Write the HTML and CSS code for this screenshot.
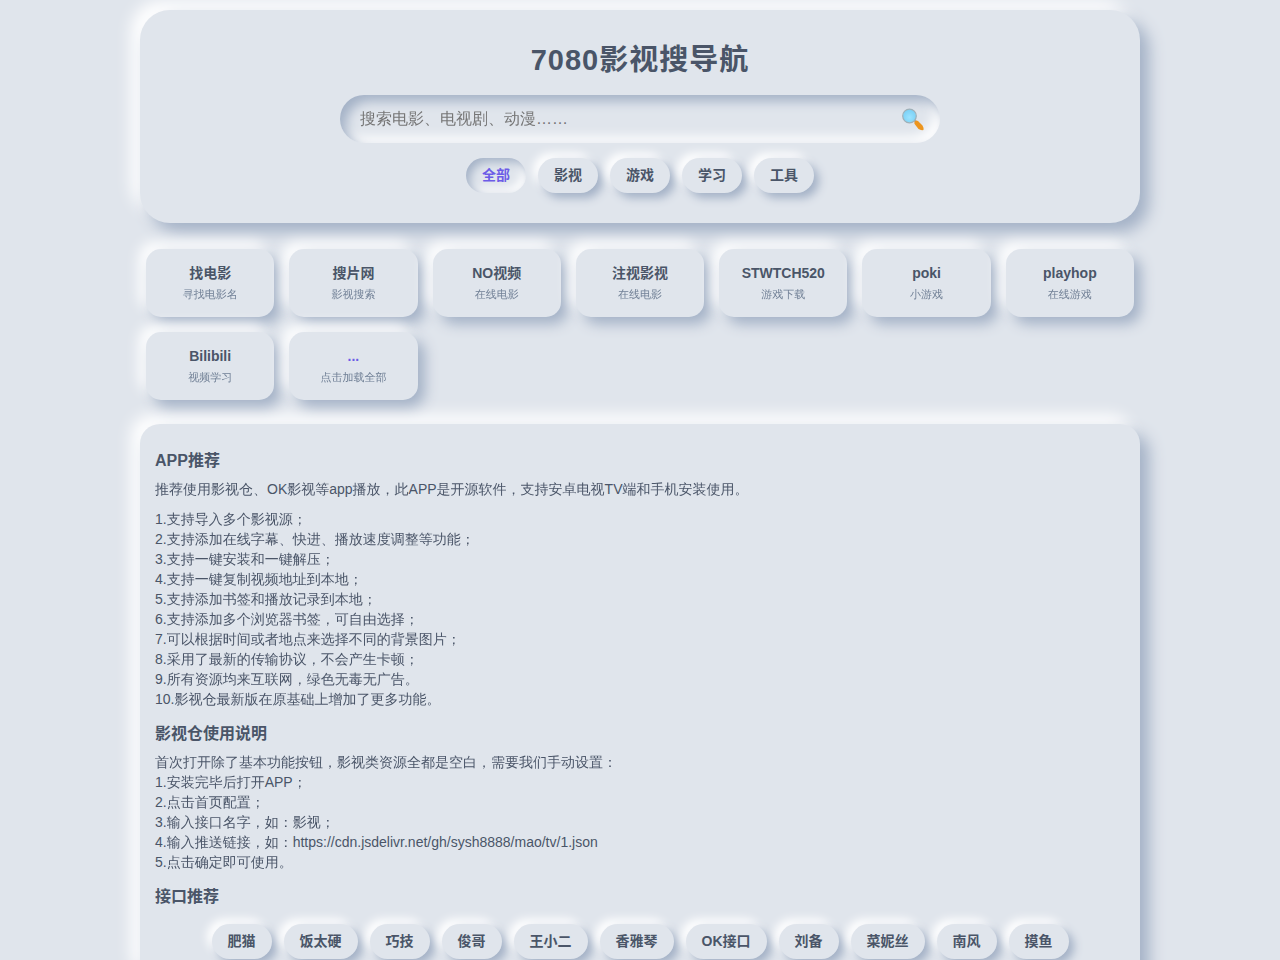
FILE: index.html
```html
<!DOCTYPE html>
<html lang="zh-CN">
<head>
    <meta charset="UTF-8">
    <meta name="viewport" content="width=device-width, initial-scale=1.0">
    <title>7080影视搜导航</title>
    <link rel="stylesheet" href="styles.css">
</head>
<body>
    <div class="container">
        <header class="header">
            <h1>7080影视搜导航</h1>
            <form class="search-box">
                <input type="text" class="search-input" aria-label="搜索" placeholder="搜索电影、电视剧、动漫……">
                <button type="button" class="search-btn" aria-label="搜索">
                    <svg viewBox="0 0 24 24" width="24" height="24">
                        <defs>
                            <radialGradient id="lens" cx="50%" cy="60%" r="60%">
                                <stop offset="0" stop-color="#9be3ff"/>
                                <stop offset="1" stop-color="#78cff5"/>
                            </radialGradient>
                        </defs>
                        <path d="M12.500 14l1.500-1.500 2.500 2.500-1.500 1.500z" fill="#90a4ae"/>
                        <path d="M13.500 15q1-2.200 3.500-1l4.500 4.500q1.500 2.500 1 4.500-3 0.500-5-1l-3.500-4.500q-1-1-0.500-2.500z" fill="#ec951f"/>
                        <circle cx="8.500" cy="9" r="6.800" fill="url(#lens)" stroke="#9fb0b8" stroke-width="1.200"/>
                    </svg>
                </button>
            </form>
            <nav class="categories">
                <button type="button" class="pill active">全部</button>
                <button type="button" class="pill">影视</button>
                <button type="button" class="pill">游戏</button>
                <button type="button" class="pill">学习</button>
                <button type="button" class="pill">工具</button>
            </nav>
        </header>

        <main class="site-grid">
            <a class="card" href="#"><h3>找电影</h3><p>寻找电影名</p></a>
            <a class="card" href="#"><h3>搜片网</h3><p>影视搜索</p></a>
            <a class="card" href="#"><h3>NO视频</h3><p>在线电影</p></a>
            <a class="card" href="#"><h3>注视影视</h3><p>在线电影</p></a>
            <a class="card" href="#"><h3>STWTCH520</h3><p>游戏下载</p></a>
            <a class="card" href="#"><h3>poki</h3><p>小游戏</p></a>
            <a class="card" href="#"><h3>playhop</h3><p>在线游戏</p></a>
            <a class="card" href="#"><h3>Bilibili</h3><p>视频学习</p></a>
            <a class="card more" href="#"><h3>...</h3><p>点击加载全部</p></a>
        </main>

        <section class="info">
            <h2>APP推荐</h2>
            <p>推荐使用影视仓、OK影视等app播放，此APP是开源软件，支持安卓电视TV端和手机安装使用。</p>
            <p>1.支持导入多个影视源；<br>
            2.支持添加在线字幕、快进、播放速度调整等功能；<br>
            3.支持一键安装和一键解压；<br>
            4.支持一键复制视频地址到本地；<br>
            5.支持添加书签和播放记录到本地；<br>
            6.支持添加多个浏览器书签，可自由选择；<br>
            7.可以根据时间或者地点来选择不同的背景图片；<br>
            8.采用了最新的传输协议，不会产生卡顿；<br>
            9.所有资源均来互联网，绿色无毒无广告。<br>
            10.影视仓最新版在原基础上增加了更多功能。</p>

            <h2>影视仓使用说明</h2>
            <p>首次打开除了基本功能按钮，影视类资源全都是空白，需要我们手动设置：<br>
            1.安装完毕后打开APP；<br>
            2.点击首页配置；<br>
            3.输入接口名字，如：影视；<br>
            4.输入推送链接，如：https://cdn.jsdelivr.net/gh/sysh8888/mao/tv/1.json<br>
            5.点击确定即可使用。</p>

            <h2>接口推荐</h2>
            <div class="categories links">
                <button type="button" class="pill">肥猫</button>
                <button type="button" class="pill">饭太硬</button>
                <button type="button" class="pill">巧技</button>
                <button type="button" class="pill">俊哥</button>
                <button type="button" class="pill">王小二</button>
                <button type="button" class="pill">香雅琴</button>
                <button type="button" class="pill">OK接口</button>
                <button type="button" class="pill">刘备</button>
                <button type="button" class="pill">菜妮丝</button>
                <button type="button" class="pill">南风</button>
                <button type="button" class="pill">摸鱼</button>
            </div>
        </section>
    </div>
</body>
</html>
```
FILE: styles.css
```css
* {
    margin: 0;
    padding: 0;
    box-sizing: border-box;
}

body {
    font-family: "Liberation Sans", "WenQuanYi Zen Hei", "Noto Sans CJK SC", sans-serif;
    background-color: #e0e5ec;
    color: #4a5568;
    padding: 10px;
}

/* WenQuanYi has no bold weight */
h1, h2, h3, .pill {
    font-family: "Liberation Sans", "Noto Sans CJK SC", sans-serif;
    font-weight: bold;
}

.container {
    max-width: 1000px;
    margin: 0 auto;
}

.header {
    padding: 30px;
    margin-bottom: 20px;
    border-radius: 30px;
    background-color: #e0e5ec;
    box-shadow: 9px 9px 16px #a3b1c6, -9px -9px 16px #ffffff;
    text-align: center;
}

.header h1 {
    font-size: 29px;
    line-height: 40px;
    letter-spacing: 1px;
    margin-bottom: 15px;
}

.search-box {
    display: flex;
    align-items: center;
    max-width: 600px;
    height: 48px;
    margin: 0 auto 15px;
    padding: 0 15px 0 20px;
    border-radius: 50px;
    box-shadow: inset 6px 6px 12px #a3b1c6, inset -6px -6px 12px #ffffff;
}

.search-input {
    flex: 1;
    border: none;
    outline: none;
    background: transparent;
    font: inherit;
    font-size: 16px;
    color: #4a5568;
}

.search-btn {
    display: flex;
    border: none;
    background: transparent;
    cursor: pointer;
}

.categories {
    display: flex;
    flex-wrap: wrap;
    justify-content: center;
    gap: 12px;
}

.pill {
    height: 35px;
    padding: 0 16px 2px;
    border: none;
    border-radius: 20px;
    background-color: #e0e5ec;
    box-shadow: 5px 5px 10px #a3b1c6, -5px -5px 10px #ffffff;
    font-size: 14px;
    line-height: 16px;
    color: #4a5568;
    cursor: pointer;
}

.pill.active {
    color: #6c5ce7;
    box-shadow: inset 4px 4px 10px #a3b1c6, inset -4px -4px 10px #ffffff;
}

.site-grid {
    display: grid;
    grid-template-columns: repeat(auto-fill, minmax(120px, 1fr));
    gap: 15px;
    padding: 6px;
    margin-bottom: 18px;
}

.card {
    padding: 15px 10px;
    border-radius: 15px;
    background-color: #e0e5ec;
    box-shadow: 7px 7px 14px #a3b1c6, -7px -7px 14px #ffffff;
    text-align: center;
    text-decoration: none;
    color: #4a5568;
}

.card h3 {
    font-size: 14px;
    line-height: 18px;
    margin-bottom: 5px;
}

.card p {
    font-size: 11px;
    line-height: 15px;
    color: #718096;
}

.card.more h3 {
    color: #6c5ce7;
}

.info {
    padding: 25px 15px;
    border-radius: 20px;
    background-color: #e0e5ec;
    box-shadow: 9px 9px 16px #a3b1c6, -9px -9px 16px #ffffff;
}

.info h2 {
    font-size: 16px;
    line-height: 24px;
    margin-bottom: 6px;
}

.info p {
    font-size: 14px;
    line-height: 20px;
    margin-bottom: 10px;
}

.info p + h2 {
    margin-top: 13px;
}

.info .links {
    margin-top: 15px;
}
```
